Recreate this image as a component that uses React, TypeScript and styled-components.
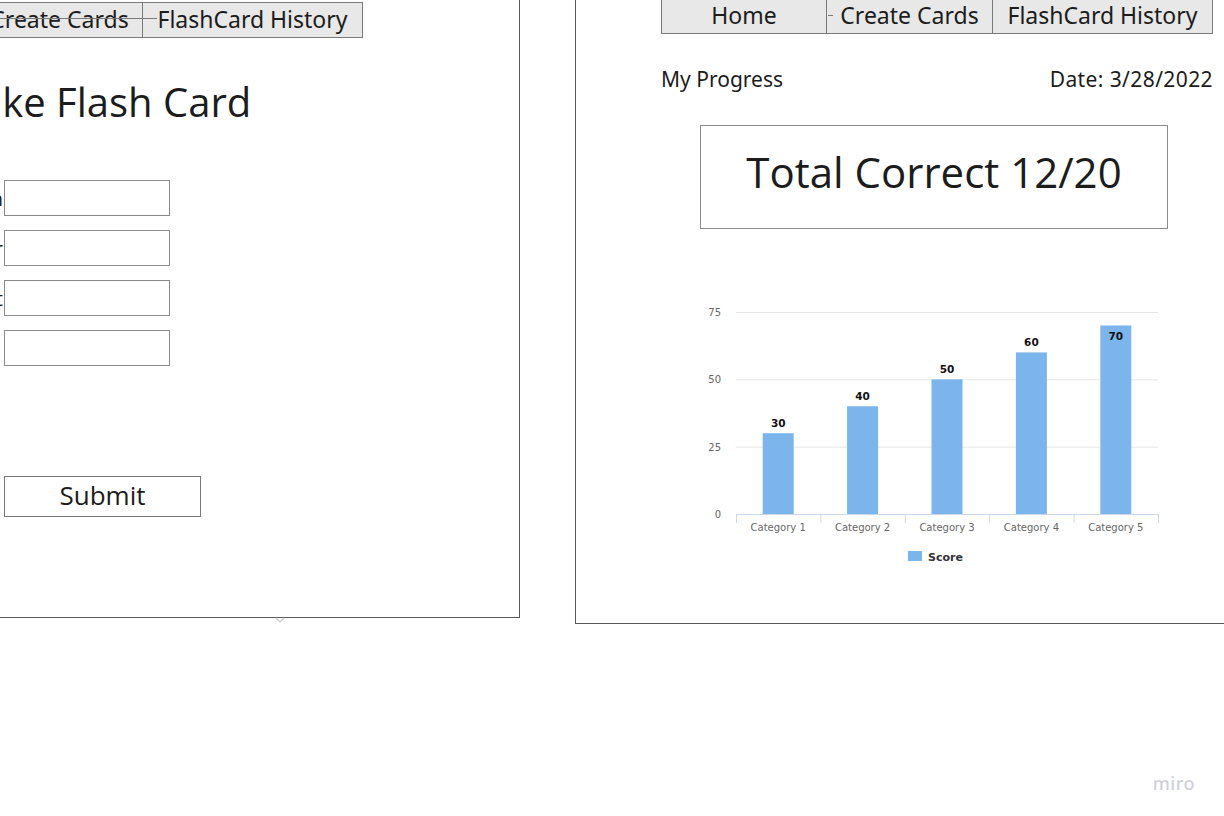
import { FC } from 'react';
import styled, { createGlobalStyle } from 'styled-components';

const Global = createGlobalStyle`
  html, body { margin: 0; padding: 0; background: #fff; }
  body { font-family: "Open Sans", "Noto Sans", sans-serif; color: #1c1c1c; }
`

const Board = styled.div`
  position: relative;
  width: 1224px;
  height: 816px;
  overflow: hidden;
  background: #fff;
`

// frames sit on the miro canvas, their place is the content
const Frame = styled.section<{ $left: number; $top: number; $w: number; $h: number }>`
  position: absolute;
  left: ${p => p.$left}px;
  top: ${p => p.$top}px;
  width: ${p => p.$w}px;
  height: ${p => p.$h}px;
  box-sizing: border-box;
  border: 1px solid #5a5a5a;
  background: #fff;
`

const Column = styled.div<{ $pl: number; $pt: number }>`
  display: flex;
  flex-direction: column;
  align-items: flex-start;
  padding: ${p => p.$pt}px 0 0 ${p => p.$pl}px;
`

const Nav = styled.nav`
  display: flex;
`

const Tab = styled.div<{ $w: number; $h: number }>`
  width: ${p => p.$w}px;
  height: ${p => p.$h}px;
  box-sizing: border-box;
  border: 1px solid #7a7a7a;
  margin-left: -1px;
  padding-bottom: 3px;
  background: #e8e8e8;
  display: flex;
  align-items: center;
  justify-content: center;
  font: 400 23px "Noto Sans", "Open Sans", sans-serif;
  color: #1c1c1c;
  white-space: nowrap;
  &:first-child { margin-left: 0; }
`

const Heading = styled.h1`
  margin: 39px 0 0 141px;
  font: 400 40px/50px "Open Sans", sans-serif;
  color: #1c1c1c;
  white-space: nowrap;
`

const Form = styled.div`
  display: flex;
  flex-direction: column;
  gap: 14px;
  margin-top: 53px;
`

const Row = styled.label`
  display: grid;
  grid-template-columns: 200px 166px;
  column-gap: 1px;
  align-items: center;
`

const Label = styled.span`
  text-align: right;
  font: 400 20px "Open Sans", sans-serif;
  color: #1c1c1c;
`

const Input = styled.div`
  height: 36px;
  box-sizing: border-box;
  border: 1px solid #8a8a8a;
  background: #fff;
`

const Submit = styled.button`
  margin: 110px 0 0 201px;
  width: 197px;
  height: 41px;
  box-sizing: border-box;
  border: 1px solid #777;
  background: #fff;
  font: 400 26px "Open Sans", sans-serif;
  color: #1c1c1c;
  padding: 0 0 5px;
`

const Header = styled.div`
  width: 552px;
  margin-top: 33px;
  display: flex;
  justify-content: space-between;
  font: 400 21px/24px "Noto Sans", "Open Sans", sans-serif;
  color: #1c1c1c;
`

const DateText = styled.span`
  letter-spacing: 0.4px;
`

const TotalBox = styled.div`
  margin: 34px 0 0 39px;
  width: 468px;
  height: 104px;
  box-sizing: border-box;
  border: 1px solid #8a8a8a;
  padding-bottom: 11px;
  display: flex;
  align-items: center;
  justify-content: center;
  font: 400 42px "Open Sans", sans-serif;
  color: #1c1c1c;
`

const Chart = styled.svg`
  display: block;
  margin: 61px 0 0 29px;
  font-family: "DejaVu Sans", sans-serif;
`

const Connector = styled.div<{ $left: number; $top: number; $w: number }>`
  position: absolute;
  left: ${p => p.$left}px;
  top: ${p => p.$top}px;
  width: ${p => p.$w}px;
  height: 1px;
  background: #7a7a7a;
`

const Handle = styled.svg`
  position: absolute;
  left: 274px;
  top: 616px;
`

const Miro = styled.div`
  position: absolute;
  right: 29px;
  bottom: 21px;
  font: 500 18px "Noto Sans", sans-serif;
  letter-spacing: 0.5px;
  color: #cfd0d8;
`

const data = [30, 40, 50, 60, 70]

const ScoreChart: FC = () => {
  const y = (v: number) => 224 - v * (202 / 75)
  const slot = 84.4
  return (
    <Chart width={480} height={290} viewBox="0 0 480 290">
      {[75, 50, 25].map(v => (
        <line key={v} x1={46} x2={468} y1={y(v) + 0.5} y2={y(v) + 0.5} stroke="#e6e6e6" />
      ))}
      {[75, 50, 25, 0].map(v => (
        <text key={v} x={31} y={y(v) + 4} textAnchor="end" fontSize={10} fill="#666">{v}</text>
      ))}
      {data.map((v, i) => {
        const cx = 46 + slot * i + slot / 2
        const top = y(v)
        const inside = v === 70
        return (
          <g key={i}>
            <rect x={cx - 15.5} y={top} width={31} height={224 - top} fill="#7cb5ec" />
            <text x={cx} y={inside ? top + 15 : top - 6} textAnchor="middle" fontSize={10.5} fontWeight={700} fill="#111">{v}</text>
            <text x={cx} y={241} textAnchor="middle" fontSize={10} fill="#666">Category {i + 1}</text>
          </g>
        )
      })}
      <line x1={46} x2={468} y1={224.5} y2={224.5} stroke="#ccd6eb" />
      {[0, 1, 2, 3, 4, 5].map(i => (
        <line key={i} x1={46 + slot * i + 0.5} x2={46 + slot * i + 0.5} y1={224} y2={233} stroke="#ccd6eb" />
      ))}
      <rect x={218} y={261} width={14} height={10} fill="#7cb5ec" />
      <text x={238} y={271} fontSize={11} fontWeight={700} fill="#333">Score</text>
    </Chart>
  )
}

const App: FC = () => {
  return (
    <Board>
      <Global />
      <Frame $left={-240} $top={-8} $w={760} $h={626}>
        <Column $pl={50} $pt={9}>
          <Nav>
            <Tab $w={166} $h={36}>Home</Tab>
            <Tab $w={167} $h={36}>Create Cards</Tab>
            <Tab $w={221} $h={36}>FlashCard History</Tab>
          </Nav>
        </Column>
        <Column $pl={42} $pt={0}>
          <Heading>Make Flash Card</Heading>
          <Form>
            <Row><Label>Question</Label><Input /></Row>
            <Row><Label>Answer</Label><Input /></Row>
            <Row><Label>Subject</Label><Input /></Row>
            <Row><Label></Label><Input /></Row>
          </Form>
          <Submit>Submit</Submit>
        </Column>
      </Frame>
      <Connector $left={0} $top={18} $w={157} />
      <Handle width={12} height={8} viewBox="0 0 12 8">
        <path d="M2 2 L6 6 L10 2" fill="none" stroke="#d0d0d0" strokeWidth={1.5} />
      </Handle>

      <Frame $left={575} $top={-40} $w={700} $h={664}>
        <Column $pl={85} $pt={38}>
          <Nav>
            <Tab $w={166} $h={35}>Home</Tab>
            <Tab $w={167} $h={35}>Create Cards</Tab>
            <Tab $w={221} $h={35}>FlashCard History</Tab>
          </Nav>
          <Header>
            <span>My Progress</span>
            <DateText>Date: 3/28/2022</DateText>
          </Header>
          <TotalBox>Total Correct 12/20</TotalBox>
          <ScoreChart />
        </Column>
      </Frame>
      <Connector $left={828} $top={15} $w={5} />
      <Miro>miro</Miro>
    </Board>
  )
}

export default App
